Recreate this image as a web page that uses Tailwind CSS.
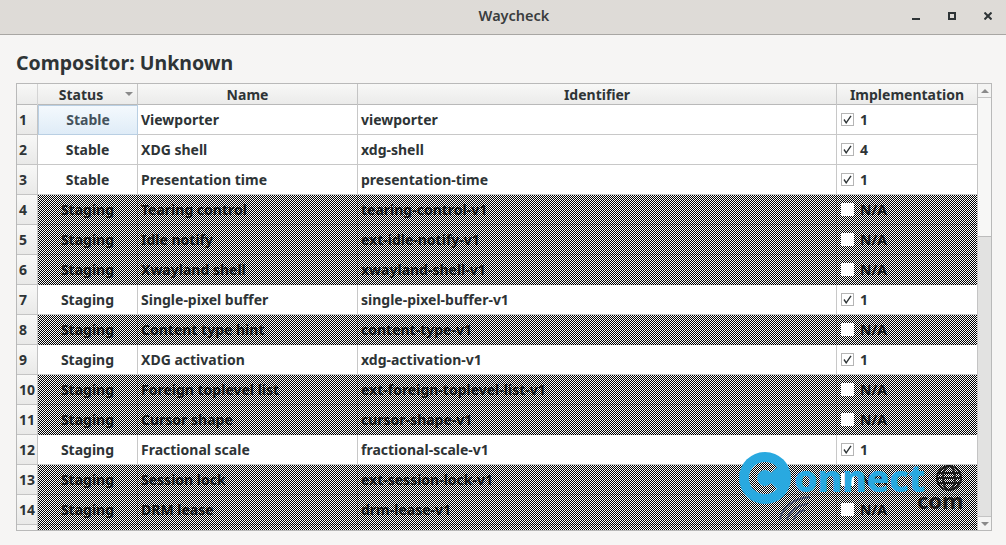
<!DOCTYPE html>
<html lang="en">
<head>
<meta charset="UTF-8">
<title>Waycheck</title>
<script src="https://cdn.jsdelivr.net/npm/@tailwindcss/browser@4"></script>
</head>
<body class="w-[1006px] h-[545px] overflow-hidden bg-[#f6f5f4] font-['Noto_Sans',sans-serif] text-[#2e3436] relative">

<svg class="absolute w-0 h-0">
  <defs>
    <pattern id="dither" width="2" height="2" patternUnits="userSpaceOnUse">
      <rect x="0" y="0" width="1" height="1" fill="#000" shape-rendering="crispEdges"/>
      <rect x="1" y="1" width="1" height="1" fill="#000" shape-rendering="crispEdges"/>
    </pattern>
  </defs>
</svg>

<!-- Title bar -->
<div class="h-[35px] bg-[#dedbd7] border-b border-[#a8a6a3] flex items-center justify-center relative">
  <span class="ml-[22px] mb-[3px] text-[14.5px] font-semibold text-[#3a3d3e]">Waycheck</span>
  <div class="absolute left-[912px] top-[12px] flex items-start gap-[28px]">
    <svg width="8" height="8" viewBox="0 0 8 8"><rect x="0" y="6" width="8" height="2" fill="#2e3436"/></svg>
    <svg width="8" height="8" viewBox="0 0 8 8"><rect x="1" y="1" width="6" height="6" fill="none" stroke="#2e3436" stroke-width="2"/></svg>
    <svg width="8" height="8" viewBox="0 0 8 8"><path d="M.5.5l7 7M7.5.5l-7 7" stroke="#2e3436" stroke-width="2"/></svg>
  </div>
</div>

<h1 class="ml-[16px] mt-[14px] h-[29px] text-[19.5px] leading-[28px] font-bold text-[#2e3436]">Compositor: Unknown</h1>

<!-- Table -->
<div class="ml-[16px] mt-[5px] w-[976px] h-[448px] border border-[#b9b9b9] bg-white flex overflow-hidden">
  <div class="w-[960px] flex flex-col text-[14px] font-bold">
    <div class="shrink-0 h-[21px] grid grid-cols-[21px_100px_220px_479px_140px] bg-gradient-to-b from-[#f8f8f7] to-[#ebebea] border-b border-[#b9b9b9] leading-[21px] text-center">
      <div class="border-r border-[#d4d4d4]"></div>
      <div class="border-r border-[#c4c4c4] relative pr-[13px]">Status<span class="absolute right-[4px] top-[8px] w-0 h-0 border-x-[4px] border-x-transparent border-t-[4px] border-t-[#8a8a8a]"></span></div>
      <div class="border-r border-[#c4c4c4]">Name</div>
      <div class="border-r border-[#c4c4c4]">Identifier</div>
      <div>Implementation</div>
    </div>

    <div class="shrink-0 h-[30px] grid grid-cols-[21px_100px_220px_479px_140px] leading-[29px]">
      <div class="bg-gradient-to-b from-[#f8f8f7] to-[#e9e9e8] border-r border-b border-[#c4c4c4] pl-[2px]">1</div>
      <div class="bg-gradient-to-b from-[#f4f9fd] to-[#dfecf7] border border-[#b9cfe3] text-center text-[#44525c] leading-[27px]">Stable</div>
      <div class="border-r border-b border-[#c8c8c8] pl-[3px]">Viewporter</div>
      <div class="border-r border-b border-[#c8c8c8] pl-[3px]">viewporter</div>
      <div class="border-b border-[#c8c8c8] pl-[4px] flex items-center gap-[6px]"><span class="w-[13px] h-[13px] bg-white border border-[#b5b5b5] flex items-center justify-center"><svg width="9" height="9" viewBox="0 0 9 9"><path d="M1 4.5l2.2 3.3L8 .8" fill="none" stroke="#2e3436" stroke-width="1.4"/></svg></span>1</div>
    </div>
    <div class="shrink-0 h-[30px] grid grid-cols-[21px_100px_220px_479px_140px] leading-[29px]">
      <div class="bg-gradient-to-b from-[#f8f8f7] to-[#e9e9e8] border-r border-b border-[#c4c4c4] pl-[2px]">2</div>
      <div class="border-r border-b border-[#c8c8c8] text-center">Stable</div>
      <div class="border-r border-b border-[#c8c8c8] pl-[3px]">XDG shell</div>
      <div class="border-r border-b border-[#c8c8c8] pl-[3px]">xdg-shell</div>
      <div class="border-b border-[#c8c8c8] pl-[4px] flex items-center gap-[6px]"><span class="w-[13px] h-[13px] bg-white border border-[#b5b5b5] flex items-center justify-center"><svg width="9" height="9" viewBox="0 0 9 9"><path d="M1 4.5l2.2 3.3L8 .8" fill="none" stroke="#2e3436" stroke-width="1.4"/></svg></span>4</div>
    </div>
    <div class="shrink-0 h-[30px] grid grid-cols-[21px_100px_220px_479px_140px] leading-[29px]">
      <div class="bg-gradient-to-b from-[#f8f8f7] to-[#e9e9e8] border-r border-b border-[#c4c4c4] pl-[2px]">3</div>
      <div class="border-r border-b border-[#c8c8c8] text-center">Stable</div>
      <div class="border-r border-b border-[#c8c8c8] pl-[3px]">Presentation time</div>
      <div class="border-r border-b border-[#c8c8c8] pl-[3px]">presentation-time</div>
      <div class="border-b border-[#c8c8c8] pl-[4px] flex items-center gap-[6px]"><span class="w-[13px] h-[13px] bg-white border border-[#b5b5b5] flex items-center justify-center"><svg width="9" height="9" viewBox="0 0 9 9"><path d="M1 4.5l2.2 3.3L8 .8" fill="none" stroke="#2e3436" stroke-width="1.4"/></svg></span>1</div>
    </div>

    <div class="shrink-0 h-[30px] grid grid-cols-[21px_100px_220px_479px_140px] leading-[29px] relative">
      <div class="bg-gradient-to-b from-[#f8f8f7] to-[#e9e9e8] border-r border-b border-[#c4c4c4] pl-[2px]">4</div>
      <div class="border-r border-b border-[#c8c8c8] text-center">Staging</div>
      <div class="border-r border-b border-[#c8c8c8] pl-[3px]">Tearing control</div>
      <div class="border-r border-b border-[#c8c8c8] pl-[3px]">tearing-control-v1</div>
      <div class="border-b border-[#c8c8c8] pl-[4px] flex items-center gap-[6px]"><span class="relative z-10 w-[13px] h-[13px] bg-white"></span>N/A</div>
      <svg class="absolute left-[21px] top-0 w-[939px] h-[30px]"><rect width="100%" height="100%" fill="url(#dither)"/></svg>
    </div>
    <div class="shrink-0 h-[30px] grid grid-cols-[21px_100px_220px_479px_140px] leading-[29px] relative">
      <div class="bg-gradient-to-b from-[#f8f8f7] to-[#e9e9e8] border-r border-b border-[#c4c4c4] pl-[2px]">5</div>
      <div class="border-r border-b border-[#c8c8c8] text-center">Staging</div>
      <div class="border-r border-b border-[#c8c8c8] pl-[3px]">Idle notify</div>
      <div class="border-r border-b border-[#c8c8c8] pl-[3px]">ext-idle-notify-v1</div>
      <div class="border-b border-[#c8c8c8] pl-[4px] flex items-center gap-[6px]"><span class="relative z-10 w-[13px] h-[13px] bg-white"></span>N/A</div>
      <svg class="absolute left-[21px] top-0 w-[939px] h-[30px]"><rect width="100%" height="100%" fill="url(#dither)"/></svg>
    </div>
    <div class="shrink-0 h-[30px] grid grid-cols-[21px_100px_220px_479px_140px] leading-[29px] relative">
      <div class="bg-gradient-to-b from-[#f8f8f7] to-[#e9e9e8] border-r border-b border-[#c4c4c4] pl-[2px]">6</div>
      <div class="border-r border-b border-[#c8c8c8] text-center">Staging</div>
      <div class="border-r border-b border-[#c8c8c8] pl-[3px]">Xwayland shell</div>
      <div class="border-r border-b border-[#c8c8c8] pl-[3px]">xwayland-shell-v1</div>
      <div class="border-b border-[#c8c8c8] pl-[4px] flex items-center gap-[6px]"><span class="relative z-10 w-[13px] h-[13px] bg-white"></span>N/A</div>
      <svg class="absolute left-[21px] top-0 w-[939px] h-[30px]"><rect width="100%" height="100%" fill="url(#dither)"/></svg>
    </div>

    <div class="shrink-0 h-[30px] grid grid-cols-[21px_100px_220px_479px_140px] leading-[29px]">
      <div class="bg-gradient-to-b from-[#f8f8f7] to-[#e9e9e8] border-r border-b border-[#c4c4c4] pl-[2px]">7</div>
      <div class="border-r border-b border-[#c8c8c8] text-center">Staging</div>
      <div class="border-r border-b border-[#c8c8c8] pl-[3px]">Single-pixel buffer</div>
      <div class="border-r border-b border-[#c8c8c8] pl-[3px]">single-pixel-buffer-v1</div>
      <div class="border-b border-[#c8c8c8] pl-[4px] flex items-center gap-[6px]"><span class="w-[13px] h-[13px] bg-white border border-[#b5b5b5] flex items-center justify-center"><svg width="9" height="9" viewBox="0 0 9 9"><path d="M1 4.5l2.2 3.3L8 .8" fill="none" stroke="#2e3436" stroke-width="1.4"/></svg></span>1</div>
    </div>

    <div class="shrink-0 h-[30px] grid grid-cols-[21px_100px_220px_479px_140px] leading-[29px] relative">
      <div class="bg-gradient-to-b from-[#f8f8f7] to-[#e9e9e8] border-r border-b border-[#c4c4c4] pl-[2px]">8</div>
      <div class="border-r border-b border-[#c8c8c8] text-center">Staging</div>
      <div class="border-r border-b border-[#c8c8c8] pl-[3px]">Content type hint</div>
      <div class="border-r border-b border-[#c8c8c8] pl-[3px]">content-type-v1</div>
      <div class="border-b border-[#c8c8c8] pl-[4px] flex items-center gap-[6px]"><span class="relative z-10 w-[13px] h-[13px] bg-white"></span>N/A</div>
      <svg class="absolute left-[21px] top-0 w-[939px] h-[30px]"><rect width="100%" height="100%" fill="url(#dither)"/></svg>
    </div>

    <div class="shrink-0 h-[30px] grid grid-cols-[21px_100px_220px_479px_140px] leading-[29px]">
      <div class="bg-gradient-to-b from-[#f8f8f7] to-[#e9e9e8] border-r border-b border-[#c4c4c4] pl-[2px]">9</div>
      <div class="border-r border-b border-[#c8c8c8] text-center">Staging</div>
      <div class="border-r border-b border-[#c8c8c8] pl-[3px]">XDG activation</div>
      <div class="border-r border-b border-[#c8c8c8] pl-[3px]">xdg-activation-v1</div>
      <div class="border-b border-[#c8c8c8] pl-[4px] flex items-center gap-[6px]"><span class="w-[13px] h-[13px] bg-white border border-[#b5b5b5] flex items-center justify-center"><svg width="9" height="9" viewBox="0 0 9 9"><path d="M1 4.5l2.2 3.3L8 .8" fill="none" stroke="#2e3436" stroke-width="1.4"/></svg></span>1</div>
    </div>

    <div class="shrink-0 h-[30px] grid grid-cols-[21px_100px_220px_479px_140px] leading-[29px] relative">
      <div class="bg-gradient-to-b from-[#f8f8f7] to-[#e9e9e8] border-r border-b border-[#c4c4c4] pl-[2px]">10</div>
      <div class="border-r border-b border-[#c8c8c8] text-center">Staging</div>
      <div class="border-r border-b border-[#c8c8c8] pl-[3px]">Foreign toplevel list</div>
      <div class="border-r border-b border-[#c8c8c8] pl-[3px]">ext-foreign-toplevel-list-v1</div>
      <div class="border-b border-[#c8c8c8] pl-[4px] flex items-center gap-[6px]"><span class="relative z-10 w-[13px] h-[13px] bg-white"></span>N/A</div>
      <svg class="absolute left-[21px] top-0 w-[939px] h-[30px]"><rect width="100%" height="100%" fill="url(#dither)"/></svg>
    </div>
    <div class="shrink-0 h-[30px] grid grid-cols-[21px_100px_220px_479px_140px] leading-[29px] relative">
      <div class="bg-gradient-to-b from-[#f8f8f7] to-[#e9e9e8] border-r border-b border-[#c4c4c4] pl-[2px]">11</div>
      <div class="border-r border-b border-[#c8c8c8] text-center">Staging</div>
      <div class="border-r border-b border-[#c8c8c8] pl-[3px]">Cursor shape</div>
      <div class="border-r border-b border-[#c8c8c8] pl-[3px]">cursor-shape-v1</div>
      <div class="border-b border-[#c8c8c8] pl-[4px] flex items-center gap-[6px]"><span class="relative z-10 w-[13px] h-[13px] bg-white"></span>N/A</div>
      <svg class="absolute left-[21px] top-0 w-[939px] h-[30px]"><rect width="100%" height="100%" fill="url(#dither)"/></svg>
    </div>

    <div class="shrink-0 h-[30px] grid grid-cols-[21px_100px_220px_479px_140px] leading-[29px]">
      <div class="bg-gradient-to-b from-[#f8f8f7] to-[#e9e9e8] border-r border-b border-[#c4c4c4] pl-[2px]">12</div>
      <div class="border-r border-b border-[#c8c8c8] text-center">Staging</div>
      <div class="border-r border-b border-[#c8c8c8] pl-[3px]">Fractional scale</div>
      <div class="border-r border-b border-[#c8c8c8] pl-[3px]">fractional-scale-v1</div>
      <div class="border-b border-[#c8c8c8] pl-[4px] flex items-center gap-[6px]"><span class="w-[13px] h-[13px] bg-white border border-[#b5b5b5] flex items-center justify-center"><svg width="9" height="9" viewBox="0 0 9 9"><path d="M1 4.5l2.2 3.3L8 .8" fill="none" stroke="#2e3436" stroke-width="1.4"/></svg></span>1</div>
    </div>

    <div class="shrink-0 h-[30px] grid grid-cols-[21px_100px_220px_479px_140px] leading-[29px] relative">
      <div class="bg-gradient-to-b from-[#f8f8f7] to-[#e9e9e8] border-r border-b border-[#c4c4c4] pl-[2px]">13</div>
      <div class="border-r border-b border-[#c8c8c8] text-center">Staging</div>
      <div class="border-r border-b border-[#c8c8c8] pl-[3px]">Session lock</div>
      <div class="border-r border-b border-[#c8c8c8] pl-[3px]">ext-session-lock-v1</div>
      <div class="border-b border-[#c8c8c8] pl-[4px] flex items-center gap-[6px]"><span class="relative z-10 w-[13px] h-[13px] bg-white"></span>N/A</div>
      <svg class="absolute left-[21px] top-0 w-[939px] h-[30px]"><rect width="100%" height="100%" fill="url(#dither)"/></svg>
    </div>
    <div class="shrink-0 h-[30px] grid grid-cols-[21px_100px_220px_479px_140px] leading-[29px] relative">
      <div class="bg-gradient-to-b from-[#f8f8f7] to-[#e9e9e8] border-r border-b border-[#c4c4c4] pl-[2px]">14</div>
      <div class="border-r border-b border-[#c8c8c8] text-center">Staging</div>
      <div class="border-r border-b border-[#c8c8c8] pl-[3px]">DRM lease</div>
      <div class="border-r border-b border-[#c8c8c8] pl-[3px]">drm-lease-v1</div>
      <div class="border-b border-[#c8c8c8] pl-[4px] flex items-center gap-[6px]"><span class="relative z-10 w-[13px] h-[13px] bg-white"></span>N/A</div>
      <svg class="absolute left-[21px] top-0 w-[939px] h-[30px]"><rect width="100%" height="100%" fill="url(#dither)"/></svg>
    </div>
    <div class="flex-1 grid grid-cols-[21px_939px]">
      <div class="bg-[#f4f4f3] border-r border-[#c4c4c4]"></div>
      <svg class="w-[939px] h-[6px]"><rect width="100%" height="100%" fill="url(#dither)"/></svg>
    </div>
  </div>

  <!-- Scrollbar -->
  <div class="w-[14px] flex flex-col border-l border-[#c4c4c4] bg-[#e2e2e1]">
    <div class="h-[14px] bg-[#f4f4f3] border-b border-[#c4c4c4] flex items-center justify-center"><span class="w-0 h-0 border-x-[4px] border-x-transparent border-b-[4px] border-b-[#8a8a8a]"></span></div>
    <div class="h-[139px] bg-[#f7f7f6] border-b border-[#bcbcbc]"></div>
    <div class="flex-1"></div>
    <div class="h-[14px] bg-[#f4f4f3] border-t border-[#c4c4c4] flex items-center justify-center"><span class="w-0 h-0 border-x-[4px] border-x-transparent border-t-[4px] border-t-[#8a8a8a]"></span></div>
  </div>
</div>

<!-- Watermark -->
<div class="absolute z-20 left-[739px] top-[452px] w-[240px] h-[72px] pointer-events-none text-[#29a9e0]">
  <svg class="absolute left-0 top-0" width="52" height="52" viewBox="0 0 52 52">
    <circle cx="26" cy="26" r="26" fill="#29a9e0"/>
    <path d="M35 18a12 12 0 1 0 0 16" fill="none" stroke="#fff" stroke-width="8"/>
    <path d="M35 18a12 12 0 1 0 0 16" fill="none" stroke="url(#dither)" stroke-width="8"/>
  </svg>
  <span class="absolute left-[55px] top-[3px] text-[38px] leading-[44px] font-extrabold tracking-[-0.5px]">onnect</span>
  <svg class="absolute left-[197px] top-[13px]" width="26" height="26" viewBox="0 0 26 26" fill="none" stroke="#1c1c1c" stroke-width="2"><circle cx="13" cy="13" r="12"/><ellipse cx="13" cy="13" rx="6" ry="12"/><path d="M2 8h22M1 13h24M2 18h22"/></svg>
  <span class="absolute left-[178px] top-[34px] text-[22px] leading-[28px] font-bold text-[#1c1c1c]">com</span>
  <svg class="absolute left-[39px] top-[43px]" width="33" height="26" viewBox="0 0 33 26" fill="none" stroke="#46506e" stroke-width="2"><path d="M2 25C4 12 16 3 32 2M9 25C11 17 19 10 30 9M16 25c1-5 5-9 11-10"/></svg>
</div>
</body>
</html>
